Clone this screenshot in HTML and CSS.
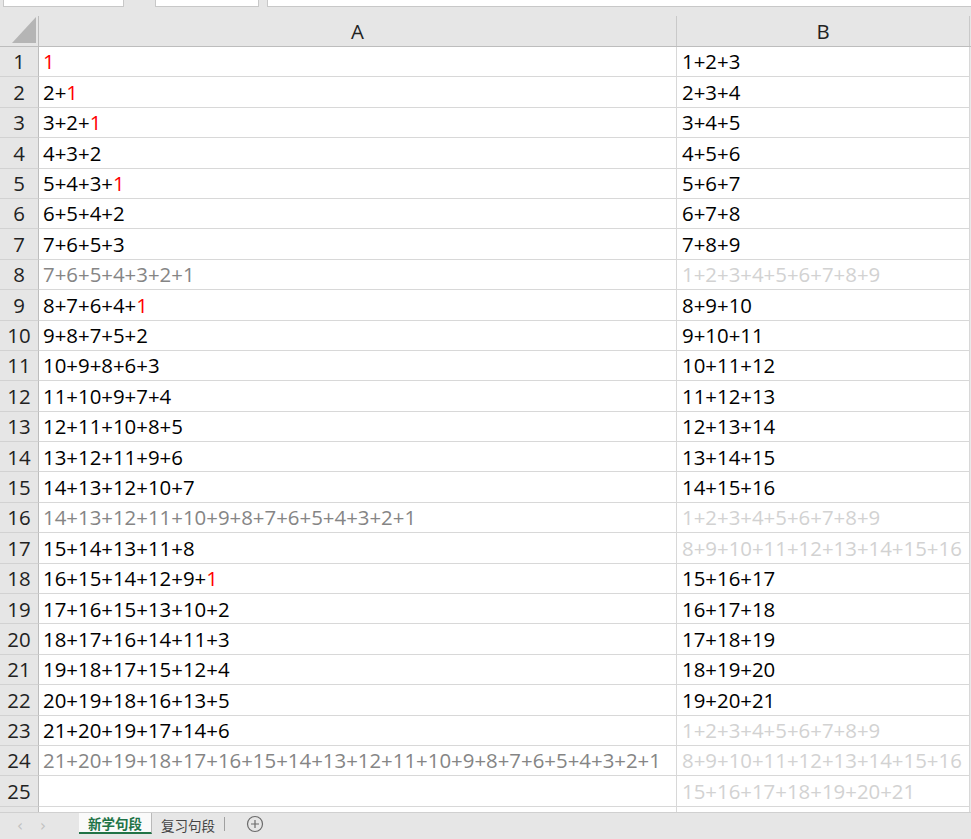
FILE: index.html
```html
<!DOCTYPE html>
<html>
<head>
<meta charset="utf-8">
<link rel="stylesheet" href="styles.css">
</head>
<body>
<div class="app">
  <div class="topbar">
    <div class="tb tb1"></div>
    <div class="tb tb2"></div>
    <div class="tb tb3"></div>
  </div>
  <div class="sheet">
    <div class="ch corner"><span><svg width="24" height="26" viewBox="0 0 24 26"><polygon points="0,26 24,26 24,0" fill="#b5b5b5"/></svg></span></div>
    <div class="ch"><span>A</span></div>
    <div class="ch"><span>B</span></div>
    <div class="ch edge"><span></span></div>

    <div class="rh">1</div><div class="c"><i>1</i></div><div class="c">1+2+3</div><div class="e"></div>
    <div class="rh">2</div><div class="c">2+<i>1</i></div><div class="c">2+3+4</div><div class="e"></div>
    <div class="rh">3</div><div class="c">3+2+<i>1</i></div><div class="c">3+4+5</div><div class="e"></div>
    <div class="rh">4</div><div class="c">4+3+2</div><div class="c">4+5+6</div><div class="e"></div>
    <div class="rh">5</div><div class="c">5+4+3+<i>1</i></div><div class="c">5+6+7</div><div class="e"></div>
    <div class="rh">6</div><div class="c">6+5+4+2</div><div class="c">6+7+8</div><div class="e"></div>
    <div class="rh">7</div><div class="c">7+6+5+3</div><div class="c">7+8+9</div><div class="e"></div>
    <div class="rh">8</div><div class="c g">7+6+5+4+3+2+1</div><div class="c l">1+2+3+4+5+6+7+8+9</div><div class="e"></div>
    <div class="rh">9</div><div class="c">8+7+6+4+<i>1</i></div><div class="c">8+9+10</div><div class="e"></div>
    <div class="rh">10</div><div class="c">9+8+7+5+2</div><div class="c">9+10+11</div><div class="e"></div>
    <div class="rh">11</div><div class="c">10+9+8+6+3</div><div class="c">10+11+12</div><div class="e"></div>
    <div class="rh">12</div><div class="c">11+10+9+7+4</div><div class="c">11+12+13</div><div class="e"></div>
    <div class="rh">13</div><div class="c">12+11+10+8+5</div><div class="c">12+13+14</div><div class="e"></div>
    <div class="rh">14</div><div class="c">13+12+11+9+6</div><div class="c">13+14+15</div><div class="e"></div>
    <div class="rh">15</div><div class="c">14+13+12+10+7</div><div class="c">14+15+16</div><div class="e"></div>
    <div class="rh">16</div><div class="c g">14+13+12+11+10+9+8+7+6+5+4+3+2+1</div><div class="c l">1+2+3+4+5+6+7+8+9</div><div class="e"></div>
    <div class="rh">17</div><div class="c">15+14+13+11+8</div><div class="c l">8+9+10+11+12+13+14+15+16</div><div class="e"></div>
    <div class="rh">18</div><div class="c">16+15+14+12+9+<i>1</i></div><div class="c">15+16+17</div><div class="e"></div>
    <div class="rh">19</div><div class="c">17+16+15+13+10+2</div><div class="c">16+17+18</div><div class="e"></div>
    <div class="rh">20</div><div class="c">18+17+16+14+11+3</div><div class="c">17+18+19</div><div class="e"></div>
    <div class="rh">21</div><div class="c">19+18+17+15+12+4</div><div class="c">18+19+20</div><div class="e"></div>
    <div class="rh">22</div><div class="c">20+19+18+16+13+5</div><div class="c">19+20+21</div><div class="e"></div>
    <div class="rh">23</div><div class="c">21+20+19+17+14+6</div><div class="c l">1+2+3+4+5+6+7+8+9</div><div class="e"></div>
    <div class="rh">24</div><div class="c g">21+20+19+18+17+16+15+14+13+12+11+10+9+8+7+6+5+4+3+2+1</div><div class="c l">8+9+10+11+12+13+14+15+16</div><div class="e"></div>
    <div class="rh">25</div><div class="c"></div><div class="c l">15+16+17+18+19+20+21</div><div class="e"></div>
    <div class="rh"></div><div class="c"></div><div class="c"></div><div class="e"></div>
  </div>
  <div class="tabbar">
    <div class="nav"><span>‹</span><span>›</span></div>
    <div class="tab active">新学句段</div>
    <div class="tab">复习句段</div>
    <div class="sep"></div>
    <div class="add"><svg width="18" height="18" viewBox="0 0 18 18"><circle cx="9" cy="9" r="7.5" fill="none" stroke="#6b6b6b" stroke-width="1.2"/><path d="M9 5v8M5 9h8" stroke="#6b6b6b" stroke-width="1.2"/></svg></div>
  </div>
</div>
</body>
</html>
```
FILE: styles.css
```css
html, body {
  margin: 0;
  padding: 0;
  background: #e6e6e6;
}
.app {
  width: 971px;
  height: 839px;
  display: flex;
  flex-direction: column;
  overflow: hidden;
  font-family: "Open Sans", "Liberation Sans", sans-serif;
}
.topbar {
  height: 7px;
  flex: none;
  display: flex;
  background: #e6e6e6;
}
.tb {
  height: 6px;
  background: #fff;
  border: 1px solid #c8c8c8;
  border-top: none;
  box-sizing: border-box;
  height: 7px;
}
.tb1 { margin-left: 3px; width: 121px; }
.tb2 { margin-left: 31px; width: 104px; }
.tb3 { margin-left: 8px; flex: 1; border-right: none; }

.sheet {
  flex: 1;
  min-height: 0;
  overflow: hidden;
  display: grid;
  grid-template-columns: 39px 638px 293px 1fr;
  grid-template-rows: 40px;
  grid-auto-rows: 30.4px;
  background: #fff;
}
.ch {
  background: #e6e6e6;
  padding-top: 9px;
  border-bottom: 1px solid #bdbdbd;
  box-sizing: border-box;
}
.ch span {
  height: 100%;
  display: flex;
  align-items: center;
  justify-content: center;
  border-right: 1px solid #c9c9c9;
  font-size: 20.4px;
  color: #222;
}
.corner span {
  justify-content: flex-end;
  align-items: flex-end;
  padding: 0 2px 3px 0;
  box-sizing: border-box;
  border-right-color: #bdbdbd;
}
.corner svg { display: block; }
.edge span { border-right: none; }

.rh {
  background: #e6e6e6;
  border-right: 1px solid #bdbdbd;
  border-bottom: 1px solid #d2d2d2;
  box-sizing: border-box;
  font-size: 20.4px;
  color: #222;
  display: flex;
  align-items: center;
  justify-content: center;
  line-height: 1;
}
.c {
  border-right: 1px solid #d8d8d8;
  border-bottom: 1px solid #d8d8d8;
  box-sizing: border-box;
  font-size: 20.4px;
  color: #000;
  white-space: nowrap;
  display: flex;
  align-items: center;
  padding-left: 4px;
  line-height: 1;
}
.c + .c { padding-left: 5px; }
.c i { font-style: normal; color: #ff0000; }
.c.g { color: #858585; }
.c.l { color: #d2d2d2; }
.e {
  background: #e9e9e9;
}

.tabbar {
  height: 27px;
  flex: none;
  display: flex;
  align-items: stretch;
  background: #e6e6e6;
  border-top: 1px solid #d0d0d0;
  box-sizing: border-box;
  font-family: "Noto Sans CJK SC", sans-serif;
}
.nav {
  width: 79px;
  display: flex;
  align-items: center;
  gap: 17px;
  padding-left: 17px;
  box-sizing: border-box;
  color: #c0c0c0;
  font-size: 15px;
  font-family: "DejaVu Sans", sans-serif;
}
.tab {
  display: flex;
  align-items: center;
  font-size: 13.5px;
  color: #444;
  padding: 0 0 4px 9px;
  height: 24px;
}
.tab.active {
  width: 73px;
  box-sizing: border-box;
  background: #fafafa;
  color: #217346;
  font-weight: bold;
  padding-left: 9px;
  border-bottom: 2px solid #217346;
  border-right: 1px solid #b9b9b9;
  height: 21px;
  padding-bottom: 0;
}
.sep {
  width: 1px;
  height: 14px;
  background: #a0a0a0;
  align-self: center;
  margin: 0 0 4px 9px;
}
.add {
  display: flex;
  align-items: center;
  margin-left: 21px;
  padding-bottom: 4px;
}
.add svg { display: block; }
```
